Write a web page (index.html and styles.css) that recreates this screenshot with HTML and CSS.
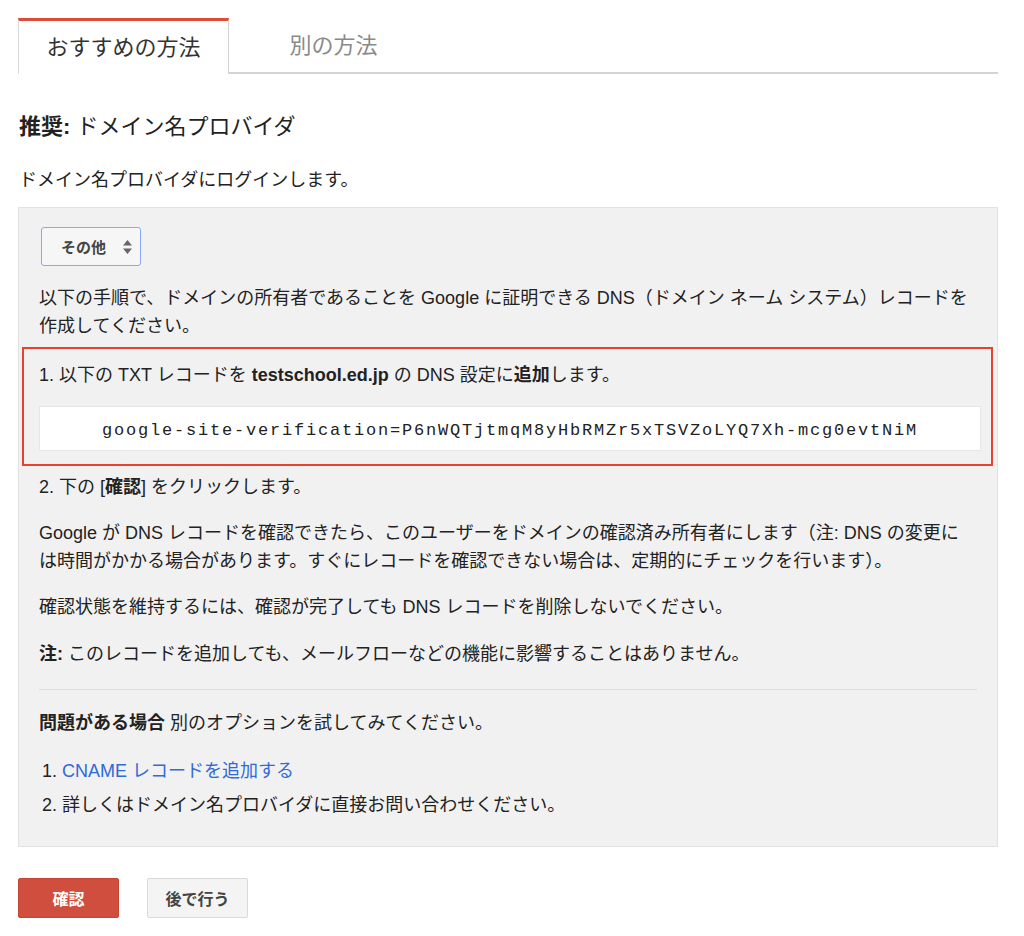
FILE: index.html
```html
<!DOCTYPE html>
<html>
<head>
	<meta charset="utf-8">
	<title>DNS 確認</title>
	<link rel="stylesheet" href="styles.css">
</head>
<body>

<div class="page">
	<div class="tabs">
		<div class="tab active">おすすめの方法</div>
		<div class="tab">別の方法</div>
		<div class="tab-rest"></div>
	</div>

	<h2 class="title"><b>推奨:</b> ドメイン名プロバイダ</h2>
	<p class="lead">ドメイン名プロバイダにログインします。</p>

	<div class="panel">
		<div class="select">
			<span>その他</span>
			<svg width="11" height="18" viewBox="0 0 11 18"><path d="M1 7.5 L5.5 2 L10 7.5 Z M1 10.5 L5.5 16 L10 10.5 Z" fill="#666"/></svg>
		</div>

		<p class="text first">以下の手順で、ドメインの所有者であることを Google に証明できる DNS（ドメイン ネーム システム）レコードを<br>作成してください。</p>

		<div class="highlight">
			<p class="text">1. 以下の TXT レコードを <b>testschool.ed.jp</b> の DNS 設定に<b>追加</b>します。</p>
			<div class="code">google-site-verification=P6nWQTjtmqM8yHbRMZr5xTSVZoLYQ7Xh-mcg0evtNiM</div>
		</div>

		<p class="text step2">2. 下の [<b>確認</b>] をクリックします。</p>
		<p class="text gap">Google が DNS レコードを確認できたら、このユーザーをドメインの確認済み所有者にします（注: DNS の変更に<br>は時間がかかる場合があります。すぐにレコードを確認できない場合は、定期的にチェックを行います）。</p>
		<p class="text gap">確認状態を維持するには、確認が完了しても DNS レコードを削除しないでください。</p>
		<p class="text gap2"><b>注:</b> このレコードを追加しても、メールフローなどの機能に影響することはありません。</p>

		<hr class="rule">

		<p class="text trouble"><b>問題がある場合</b> 別のオプションを試してみてください。</p>
		<ol class="options">
			<li><a href="#">CNAME レコードを追加する</a></li>
			<li>詳しくはドメイン名プロバイダに直接お問い合わせください。</li>
		</ol>
	</div>

	<div class="buttons">
		<button class="btn primary">確認</button>
		<button class="btn">後で行う</button>
	</div>
</div>

</body>
</html>
```

FILE: styles.css
```css
body { margin: 0; padding: 0; background: #fff; color: #222;
	font-family: "Liberation Sans", "Noto Sans CJK JP", sans-serif; }
.page { width: 980px; margin-left: 18px; padding-top: 18px; }

/* tabs */
.tabs { display: flex; height: 56px; }
.tab { width: 209px; display: flex; align-items: center; justify-content: center;
	font-size: 22px; color: #8a8a8a; border-bottom: 2px solid #d4d4d4; box-sizing: border-box; padding-bottom: 4px; }
.tab.active { color: #333; border-top: 3px solid #dd4b39; border-left: 1px solid #d9d9d9;
	border-right: 1px solid #d4d4d4; border-bottom: none; padding-bottom: 6px; width: 211px; }
.tab-rest { flex: 1; border-bottom: 2px solid #d4d4d4; }

.title { font-size: 22px; font-weight: normal; line-height: 30px; margin: 38px 0 0 1px; color: #222; }
.lead { font-size: 18px; line-height: 28px; margin: 24px 0 0 1px; }

/* grey panel */
.panel { background: #f1f1f1; border: 1px solid #e2e2e2; margin-top: 13px; padding: 19px 20px 27px 20px; }
.select { width: 100px; height: 39px; box-sizing: border-box; border: 1px solid #86a9f2; border-radius: 3px;
	background: #f6f6f6; display: flex; align-items: center; justify-content: space-between;
	padding: 0 7px 0 19px; margin-left: 2px; font-size: 15px; font-weight: bold; color: #444; }
.select svg { display: block; }

.text { font-size: 18px; line-height: 28px; margin: 0; }
.text.first { margin-top: 18px; }
.text.step2 { margin-top: 7px; }
.text.gap { margin-top: 18px; }
.text.gap2 { margin-top: 19px; }
.text.trouble { margin-top: 19px; }

.highlight { border: 2px solid #e5432f; margin: 7px -16px 0 -17px; padding: 12px 10px 13px 15px; }
.code { background: #fff; border: 1px solid #e6e6e6; height: 45px; margin-top: 17px; box-sizing: border-box;
	display: flex; align-items: center; justify-content: center; padding-top: 3px;
	font-family: "Liberation Mono", monospace; font-size: 17px; letter-spacing: 1.8px; color: #222; }

.rule { border: none; border-top: 1px solid #dcdcdc; margin: 21px 0 0 0; height: 0; }

.options { margin: 20px 0 0 0; padding: 0 0 0 3px; list-style: none; counter-reset: opt; }
.options li { font-size: 18px; line-height: 28px; counter-increment: opt; }
.options li + li { margin-top: 6px; }
.options li::before { content: counter(opt) ". "; }
.options a { color: #2f6ad8; text-decoration: none; }

/* buttons */
.buttons { display: flex; gap: 28px; margin-top: 31px; }
.btn { height: 40px; width: 101px; border-radius: 2px; font-size: 16px; font-weight: bold;
	font-family: "Liberation Sans", "Noto Sans CJK JP", sans-serif; color: #444;
	background: #f4f4f4; border: 1px solid #d9d9d9; cursor: pointer; }
.btn.primary { background: #cf4e3d; border-color: #c64535; color: #fff; }
```
